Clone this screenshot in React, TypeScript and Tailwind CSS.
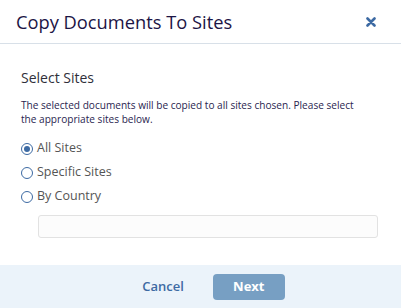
import React, { useState } from 'react';

const options = ['All Sites', 'Specific Sites', 'By Country'];

const App = () => {
  const [selected, setSelected] = useState('All Sites');

  return (
    <div className="w-[401px] h-[308px] bg-white flex flex-col font-['Open_Sans',sans-serif]">
      {/* Header */}
      <div className="h-[44px] flex items-center justify-between pl-4 pr-[25px] border-b border-[#d8e0e8]">
        <h1 className="text-[18.3px] text-[#1c1445] leading-none pt-[1px]">Copy Documents To Sites</h1>
        <button className="text-[#3d6aa3]">
          <svg width="10" height="10" viewBox="0 0 10 10">
            <path d="M1.5 1.5 L8.5 8.5 M8.5 1.5 L1.5 8.5" stroke="currentColor" strokeWidth="2.6" strokeLinecap="round" />
          </svg>
        </button>
      </div>

      {/* Body */}
      <div className="flex-1 px-[21px] pt-[24px]">
        <h2 className="text-[14px] text-[#2f2f3a] leading-5">Select Sites</h2>
        <p className="mt-[10px] whitespace-nowrap text-[10.1px] leading-[14px] text-[#2a2550]">
          The selected documents will be copied to all sites chosen. Please select
          <br />
          the appropriate sites below.
        </p>

        <div className="mt-[14px] flex flex-col gap-[7px]">
          {options.map((opt) => (
            <label key={opt} className="flex items-center gap-[4px] h-[17px] cursor-pointer" onClick={() => setSelected(opt)}>
              <span className="w-[12px] h-[12px] rounded-full border border-[#3d6aa3] flex items-center justify-center">
                {selected === opt && <span className="w-[6px] h-[6px] rounded-full bg-[#3d6aa3]" />}
              </span>
              <span className="text-[12.5px] text-[#555]">{opt}</span>
            </label>
          ))}
        </div>

        <div className="ml-[17px] mt-[10px] h-[23px] w-[340px] rounded-[3px] border border-[#e2e2e2] bg-[#fcfcfc]" />
      </div>

      {/* Footer */}
      <div className="h-[43px] bg-[#ebf3fa] flex items-center justify-center gap-[29px] pl-[26px]">
        <button className="text-[13px] font-semibold text-[#3d6aa3]">Cancel</button>
        <button className="w-[72px] h-[26px] rounded-[4px] bg-[#779fc3] text-white text-[13px] font-bold">Next</button>
      </div>
    </div>
  );
};

export default App;
